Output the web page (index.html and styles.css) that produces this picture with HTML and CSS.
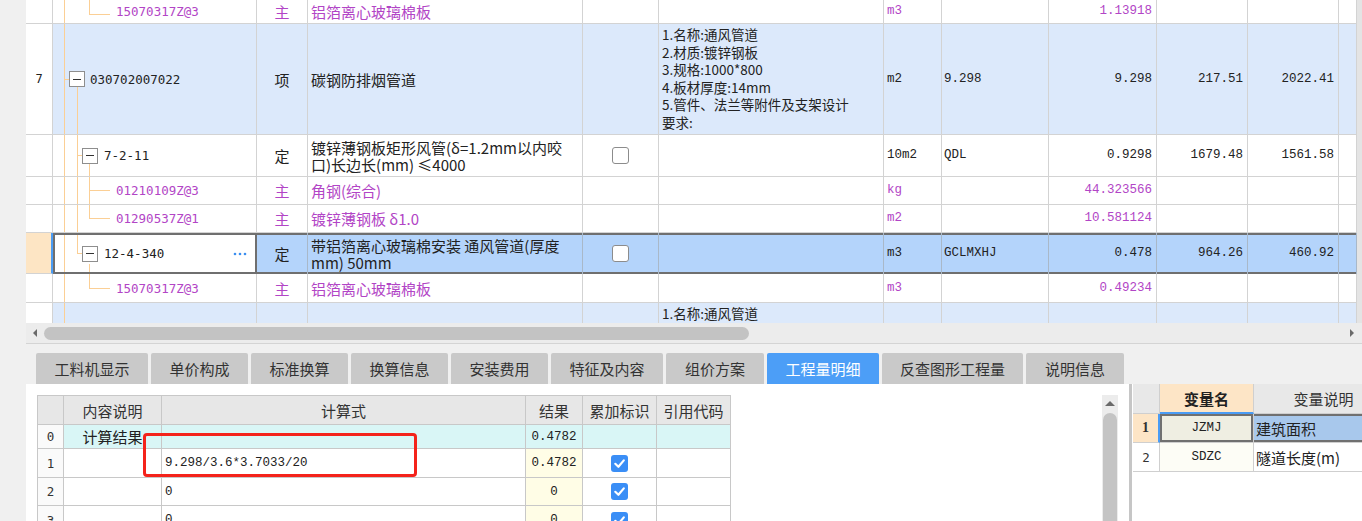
FILE: index.html
```html
<!DOCTYPE html>
<html lang="zh-CN">
<head>
<meta charset="utf-8">
<title>工程量明细</title>
<link rel="stylesheet" href="styles.css">
</head>
<body>
<div class="app">
  <div class="top">
    <div class="grid">
      <div class="row r24 first">
        <div class="c num"></div>
        <div class="c code t-top"><span class="lf mat">15070317Z@3</span></div>
        <div class="c type mat">主</div>
        <div class="c name mat">铝箔离心玻璃棉板</div>
        <div class="c"></div>
        <div class="c feat"></div>
        <div class="c unit mat">m3</div>
        <div class="c expr"></div>
        <div class="c qty mat">1.13918</div>
        <div class="c money"></div>
        <div class="c money"></div>
        <div class="c"></div>
      </div>
      <div class="row r111 item">
        <div class="c num">7</div>
        <div class="c code t-root"><span class="tog"></span><span class="cd">030702007022</span></div>
        <div class="c type">项</div>
        <div class="c name">碳钢防排烟管道</div>
        <div class="c"></div>
        <div class="c feat">1.名称:通风管道<br>2.材质:镀锌钢板<br>3.规格:1000*800<br>4.板材厚度:14mm<br>5.管件、法兰等附件及支架设计<br>要求:</div>
        <div class="c unit">m2</div>
        <div class="c expr">9.298</div>
        <div class="c qty">9.298</div>
        <div class="c money">217.51</div>
        <div class="c money">2022.41</div>
        <div class="c"></div>
      </div>
      <div class="row r42">
        <div class="c num"></div>
        <div class="c code t-l2 lv2"><span class="tog"></span><span class="cd">7-2-11</span></div>
        <div class="c type">定</div>
        <div class="c name two">镀锌薄钢板矩形风管(δ=1.2mm以内咬<br>口)长边长(mm) ≤4000</div>
        <div class="c chk"><span class="box"></span></div>
        <div class="c feat"></div>
        <div class="c unit">10m2</div>
        <div class="c expr">QDL</div>
        <div class="c qty">0.9298</div>
        <div class="c money">1679.48</div>
        <div class="c money">1561.58</div>
        <div class="c"></div>
      </div>
      <div class="row r28">
        <div class="c num"></div>
        <div class="c code t-leaf"><span class="lf mat">01210109Z@3</span></div>
        <div class="c type mat">主</div>
        <div class="c name mat">角钢(综合)</div>
        <div class="c"></div>
        <div class="c feat"></div>
        <div class="c unit mat">kg</div>
        <div class="c expr"></div>
        <div class="c qty mat">44.323566</div>
        <div class="c money"></div>
        <div class="c money"></div>
        <div class="c"></div>
      </div>
      <div class="row r28">
        <div class="c num"></div>
        <div class="c code t-leaflast1"><span class="lf mat">01290537Z@1</span></div>
        <div class="c type mat">主</div>
        <div class="c name mat">镀锌薄钢板 δ1.0</div>
        <div class="c"></div>
        <div class="c feat"></div>
        <div class="c unit mat">m2</div>
        <div class="c expr"></div>
        <div class="c qty mat">10.581124</div>
        <div class="c money"></div>
        <div class="c money"></div>
        <div class="c"></div>
      </div>
      <div class="row r41 sel">
        <div class="c num"></div>
        <div class="c code t-l2last lv2"><span class="tog"></span><span class="cd">12-4-340</span>
          <svg class="dots" width="14" height="4" viewBox="0 0 14 4"><circle cx="2" cy="2" r="1.3"/><circle cx="7" cy="2" r="1.3"/><circle cx="12" cy="2" r="1.3"/></svg>
        </div>
        <div class="c type">定</div>
        <div class="c name two">带铝箔离心玻璃棉安装 通风管道(厚度<br>mm) 50mm</div>
        <div class="c chk"><span class="box"></span></div>
        <div class="c feat"></div>
        <div class="c unit">m3</div>
        <div class="c expr">GCLMXHJ</div>
        <div class="c qty">0.478</div>
        <div class="c money">964.26</div>
        <div class="c money">460.92</div>
        <div class="c"></div>
      </div>
      <div class="row r29">
        <div class="c num"></div>
        <div class="c code t-leaflast2"><span class="lf mat">15070317Z@3</span></div>
        <div class="c type mat">主</div>
        <div class="c name mat">铝箔离心玻璃棉板</div>
        <div class="c"></div>
        <div class="c feat"></div>
        <div class="c unit mat">m3</div>
        <div class="c expr"></div>
        <div class="c qty mat">0.49234</div>
        <div class="c money"></div>
        <div class="c money"></div>
        <div class="c"></div>
      </div>
      <div class="row r30 item">
        <div class="c num"></div>
        <div class="c code t-line"></div>
        <div class="c type"></div>
        <div class="c name"></div>
        <div class="c"></div>
        <div class="c feat">1.名称:通风管道</div>
        <div class="c unit"></div>
        <div class="c expr"></div>
        <div class="c qty"></div>
        <div class="c money"></div>
        <div class="c money"></div>
        <div class="c"></div>
      </div>
    </div>
    <div class="vstrip"></div>
  </div>

  <div class="hscroll">
    <span class="arr-l"></span>
    <span class="hthumb"></span>
    <span class="hspace"></span>
    <span class="arr-r"></span>
  </div>

  <div class="tabbar">
    <span class="tab w112">工料机显示</span>
    <span class="tab w97">单价构成</span>
    <span class="tab w97">标准换算</span>
    <span class="tab w97">换算信息</span>
    <span class="tab w97">安装费用</span>
    <span class="tab w112">特征及内容</span>
    <span class="tab w98">组价方案</span>
    <span class="tab w112 active">工程量明细</span>
    <span class="tab w141">反查图形工程量</span>
    <span class="tab w98">说明信息</span>
  </div>

  <div class="bottom">
    <div class="lpanel">
      <div class="qtable">
        <div class="qrow qhead">
          <div class="q qn"></div>
          <div class="q">内容说明</div>
          <div class="q">计算式</div>
          <div class="q">结果</div>
          <div class="q">累加标识</div>
          <div class="q">引用代码</div>
        </div>
        <div class="qrow qsum">
          <div class="q qn">0</div>
          <div class="q cy">计算结果</div>
          <div class="q cy"></div>
          <div class="q cy res">0.4782</div>
          <div class="q cy"></div>
          <div class="q cy"></div>
        </div>
        <div class="qrow h29">
          <div class="q qn">1</div>
          <div class="q"></div>
          <div class="q formula">9.298/3.6*3.7033/20</div>
          <div class="q yl res">0.4782</div>
          <div class="q"><svg class="cb" width="17" height="17" viewBox="0 0 17 17"><rect width="17" height="17" rx="3"/><path d="M4.3 8.8 L7.4 11.8 L12.8 5.4"/></svg></div>
          <div class="q"></div>
        </div>
        <div class="qrow h28">
          <div class="q qn">2</div>
          <div class="q"></div>
          <div class="q formula">0</div>
          <div class="q yl res">0</div>
          <div class="q"><svg class="cb" width="17" height="17" viewBox="0 0 17 17"><rect width="17" height="17" rx="3"/><path d="M4.3 8.8 L7.4 11.8 L12.8 5.4"/></svg></div>
          <div class="q"></div>
        </div>
        <div class="qrow h29">
          <div class="q qn">3</div>
          <div class="q"></div>
          <div class="q formula">0</div>
          <div class="q yl res">0</div>
          <div class="q"><svg class="cb" width="17" height="17" viewBox="0 0 17 17"><rect width="17" height="17" rx="3"/><path d="M4.3 8.8 L7.4 11.8 L12.8 5.4"/></svg></div>
          <div class="q"></div>
        </div>
      </div>
      <div class="vscroll">
        <span class="arr-u"></span>
        <span class="vthumb"></span>
      </div>
      <div class="redbox"></div>
    </div>
    <div class="splitter"></div>
    <div class="rpanel">
      <div class="vrow vhead">
        <div class="v vn"></div>
        <div class="v vname">变量名</div>
        <div class="v">变量说明</div>
      </div>
      <div class="vrow vsel">
        <div class="v vn bold">1</div>
        <div class="v vname code2">JZMJ</div>
        <div class="v desc">建筑面积</div>
      </div>
      <div class="vrow">
        <div class="v vn">2</div>
        <div class="v vname code2 pale">SDZC</div>
        <div class="v desc">隧道长度(m)</div>
      </div>
    </div>
  </div>
</div>
</body>
</html>
```

FILE: styles.css
```css
* { box-sizing: border-box; }

body {
  margin: 0;
  background: #f0f0f0;
  font-family: "Noto Sans CJK SC", "Liberation Sans", sans-serif;
  color: #222;
  overflow: hidden;
}

.app {
  width: 1362px;
  height: 521px;
  padding-left: 26px;
  overflow: hidden;
}

/* ---------- top grid ---------- */
.top {
  display: flex;
  height: 323px;
  overflow: hidden;
  background: #fff;
}

.grid {
  width: 1331px;
  flex: none;
}

.vstrip {
  flex: 1;
  background: #e4e4e4;
}

.row {
  display: grid;
  grid-template-columns: 27px 204px 51px 275px 76px 225px 58px 107px 108px 91px 91px 18px;
}

.r24 { height: 24px; }
.r30 { height: 30px; }
.r111 { height: 111px; }
.r42 { height: 42px; }
.r28 { height: 28px; }
.r29 { height: 29px; }
.r41 { height: 41px; }

.c {
  display: flex;
  align-items: center;
  min-width: 0;
  overflow: hidden;
  white-space: nowrap;
  border-right: 1px solid #d3d3d3;
  border-bottom: 1px solid #d3d3d3;
  background-color: #fff;
  font-size: 15px;
  line-height: 17px;
}

.first .c {
  align-items: flex-start;
  padding-top: 3px;
}

.item .c { background-color: #dce9fb; }
.item .c.num { background-color: #fff; }

.num {
  justify-content: center;
  font-family: "DejaVu Sans Mono", monospace;
  font-size: 12px;
}

.code {
  font-family: "DejaVu Sans Mono", monospace;
  font-size: 12.5px;
  padding-left: 16px;
}

.code.lv2 { padding-left: 29px; }

.code .lf { padding-left: 47px; }

.tog {
  flex: none;
  width: 16px;
  height: 16px;
  border: 1px solid #8e8e8e;
  background: linear-gradient(#333, #333) center / 8px 1px no-repeat, #fff;
  margin-right: 5px;
}

.lv2 .tog { margin-right: 6px; }

.cd { color: #222; }

.dots {
  margin-left: auto;
  margin-right: 10px;
  fill: #3a8ef0;
}

.type {
  justify-content: center;
}

.name {
  padding-left: 3px;
}

.name.two {
  white-space: normal;
  align-items: center;
}

.mat { color: #b245c6; }

.chk { justify-content: center; }

.box {
  width: 17px;
  height: 17px;
  border: 1px solid #8c8c8c;
  border-radius: 3px;
  background: #fff;
}

.feat {
  align-items: flex-start;
  padding: 2px 0 0 3px;
  font-size: 13.5px;
  line-height: 17.6px;
  white-space: nowrap;
}

.unit, .expr, .qty, .money {
  font-family: "Liberation Mono", monospace;
  font-size: 12.5px;
}

.unit { padding-left: 3px; }
.expr { padding-left: 2px; }
.qty, .money { justify-content: flex-end; padding-right: 4px; }

/* tree connector lines */
.t-top, .t-root, .t-l2, .t-leaf, .t-leaflast1, .t-l2last, .t-leaflast2, .t-line {
  background-repeat: no-repeat;
}

.t-top {
  background-image: linear-gradient(#fbcf95, #fbcf95), linear-gradient(#fbcf95, #fbcf95), linear-gradient(#fbcf95, #fbcf95);
  background-position: 11px 0, 36px 0, 36px 14px;
  background-size: 1px 100%, 1px 15px, 21px 1px;
}

.t-root {
  background-image: linear-gradient(#fbcf95, #fbcf95), linear-gradient(#fbcf95, #fbcf95), linear-gradient(#fbcf95, #fbcf95);
  background-position: 11px 0, 11px 50%, 24px bottom;
  background-size: 1px 100%, 5px 1px, 1px calc(50% - 8px);
}

.t-l2 {
  background-image: linear-gradient(#fbcf95, #fbcf95), linear-gradient(#fbcf95, #fbcf95), linear-gradient(#fbcf95, #fbcf95), linear-gradient(#fbcf95, #fbcf95);
  background-position: 11px 0, 24px 0, 24px 50%, 36px bottom;
  background-size: 1px 100%, 1px 100%, 5px 1px, 1px calc(50% - 8px);
}

.t-leaf {
  background-image: linear-gradient(#fbcf95, #fbcf95), linear-gradient(#fbcf95, #fbcf95), linear-gradient(#fbcf95, #fbcf95), linear-gradient(#fbcf95, #fbcf95);
  background-position: 11px 0, 24px 0, 36px 0, 36px 50%;
  background-size: 1px 100%, 1px 100%, 1px 100%, 21px 1px;
}

.t-leaflast1 {
  background-image: linear-gradient(#fbcf95, #fbcf95), linear-gradient(#fbcf95, #fbcf95), linear-gradient(#fbcf95, #fbcf95), linear-gradient(#fbcf95, #fbcf95);
  background-position: 11px 0, 24px 0, 36px 0, 36px 50%;
  background-size: 1px 100%, 1px 100%, 1px 50%, 21px 1px;
}

.t-l2last {
  background-image: linear-gradient(#fbcf95, #fbcf95), linear-gradient(#fbcf95, #fbcf95), linear-gradient(#fbcf95, #fbcf95), linear-gradient(#fbcf95, #fbcf95);
  background-position: 11px 0, 24px 0, 24px 50%, 36px bottom;
  background-size: 1px 100%, 1px 50%, 5px 1px, 1px calc(50% - 10px);
}

.t-leaflast2 {
  background-image: linear-gradient(#fbcf95, #fbcf95), linear-gradient(#fbcf95, #fbcf95), linear-gradient(#fbcf95, #fbcf95);
  background-position: 11px 0, 36px 0, 36px 50%;
  background-size: 1px 100%, 1px 50%, 21px 1px;
}

.t-line {
  background-image: linear-gradient(#fbcf95, #fbcf95);
  background-position: 11px 0;
  background-size: 1px 100%;
}

/* selected row */
.sel .c {
  background-color: #b4d4fb;
  border-bottom: none;
  border-right-color: #a9b8c8;
  box-shadow: inset 0 2px #6f6f6f, inset 0 -2px #6f6f6f;
}

.sel .c.num {
  background-color: #fde5c4;
  box-shadow: none;
  border-right: 2px solid #4a9cf5;
  border-bottom: 1px solid #d3d3d3;
}

.sel .c.code {
  background-color: #fff;
  border-right: none;
  box-shadow: inset 0 0 0 2px #6f6f6f;
}

/* ---------- horizontal scrollbar ---------- */
.hscroll {
  height: 20px;
  display: flex;
  align-items: center;
  background: #ececec;
  padding: 0 8px 0 7px;
}

.arr-l {
  width: 0;
  height: 0;
  border-top: 4px solid transparent;
  border-bottom: 4px solid transparent;
  border-right: 4px solid #6a6a6a;
  margin-right: 7px;
}

.hthumb {
  width: 705px;
  height: 13px;
  border-radius: 7px;
  background: #c3c3c3;
}

.hspace { flex: 1; }

.arr-r {
  width: 0;
  height: 0;
  border-top: 4px solid transparent;
  border-bottom: 4px solid transparent;
  border-left: 4px solid #6a6a6a;
}

/* ---------- tabs ---------- */
.tabbar {
  height: 41px;
  display: flex;
  align-items: flex-end;
  gap: 3px;
  padding-left: 10px;
  border-top: 1px solid #d4d4d4;
  background: #f0f0f0;
}

.tab {
  height: 31px;
  display: flex;
  align-items: center;
  justify-content: center;
  background: #c9c9c9;
  border-radius: 2px 2px 0 0;
  font-size: 15px;
  color: #333;
}

.tab.active {
  background: #4c9ef7;
  color: #fff;
}

.w112 { width: 112px; }
.w97 { width: 97px; }
.w98 { width: 98px; }
.w141 { width: 141px; }

/* ---------- bottom area ---------- */
.bottom {
  display: flex;
  height: 137px;
}

.lpanel {
  position: relative;
  width: 1103px;
  flex: none;
  background: #fff;
  display: flex;
  justify-content: space-between;
  padding: 11px 11px 0 11px;
}

.qtable {
  width: 694px;
  border-left: 1px solid #c8c8c8;
  border-top: 1px solid #c8c8c8;
  align-self: flex-start;
}

.qrow {
  display: grid;
  grid-template-columns: 26px 98px 364px 57px 74px 74px;
}

.qhead { height: 29px; }
.qsum { height: 24px; }
.h29 { height: 29px; }
.h28 { height: 28px; }

.q {
  display: flex;
  align-items: center;
  justify-content: center;
  border-right: 1px solid #c8c8c8;
  border-bottom: 1px solid #c8c8c8;
  font-size: 15px;
  color: #222;
  white-space: nowrap;
  overflow: hidden;
}

.qhead .q {
  background: #e7e7e7;
  color: #333;
}

.qn {
  font-family: "DejaVu Sans Mono", monospace;
  font-size: 12.5px;
  background: #fafafa;
  color: #333;
}

.cy { background: #d9f6f6; }
.yl { background: #fffde6; }

.res {
  font-family: "Liberation Mono", monospace;
  font-size: 12.5px;
}

.formula {
  justify-content: flex-start;
  padding-left: 3px;
  font-family: "Liberation Mono", monospace;
  font-size: 12.5px;
}

.cb rect { fill: #3a8ef6; }
.cb path {
  fill: none;
  stroke: #fff;
  stroke-width: 2.2;
  stroke-linecap: round;
  stroke-linejoin: round;
}

.vscroll {
  width: 16px;
  flex: none;
  display: flex;
  flex-direction: column;
  align-items: center;
  background: #ececec;
  padding-top: 6px;
}

.arr-u {
  width: 0;
  height: 0;
  border-left: 5px solid transparent;
  border-right: 5px solid transparent;
  border-bottom: 5px solid #6a6a6a;
  margin-bottom: 7px;
}

.vthumb {
  flex: 1;
  width: 14px;
  border-radius: 7px 7px 0 0;
  background: #c4c4c4;
}

.redbox {
  position: absolute;
  left: 117px;
  top: 49px;
  width: 274px;
  height: 44px;
  border: 3px solid #f4231b;
  border-radius: 4px;
}

.splitter {
  width: 3px;
  flex: none;
  background: #c6c6c6;
}

.rpanel {
  flex: 1;
  background: #fff;
  overflow: hidden;
  padding-left: 1px;
}

.vrow {
  display: grid;
  grid-template-columns: 27px 94px 140px;
  height: 29px;
}

.vhead { height: 30px; }

.v {
  display: flex;
  align-items: center;
  justify-content: center;
  border-right: 1px solid #cfcfcf;
  border-bottom: 1px solid #cfcfcf;
  font-size: 15px;
  white-space: nowrap;
}

.vhead .v {
  background: #e8e8e8;
  color: #333;
}

.vhead .vname {
  background: #fde5c6;
  font-weight: bold;
  color: #222;
  border-bottom: 2px solid #4a9cf5;
}

.vn {
  font-family: "DejaVu Sans Mono", monospace;
  font-size: 12.5px;
  color: #333;
}

.vn.bold {
  background: #fde5c6;
  font-family: "Liberation Serif", serif;
  font-weight: bold;
  font-size: 14px;
  border-right: 2px solid #4a9cf5;
}

.code2 {
  font-family: "Liberation Mono", monospace;
  font-size: 12.5px;
}

.desc {
  justify-content: flex-start;
  padding-left: 2px;
}

.vsel .vname {
  background: #efeee2;
  box-shadow: inset 0 0 0 2px #707070;
}

.vsel .desc {
  background: #a8c8ec;
  box-shadow: inset 0 2px #707070, inset 0 -2px #707070;
}

.pale { background: #fdfdf6; }
```
